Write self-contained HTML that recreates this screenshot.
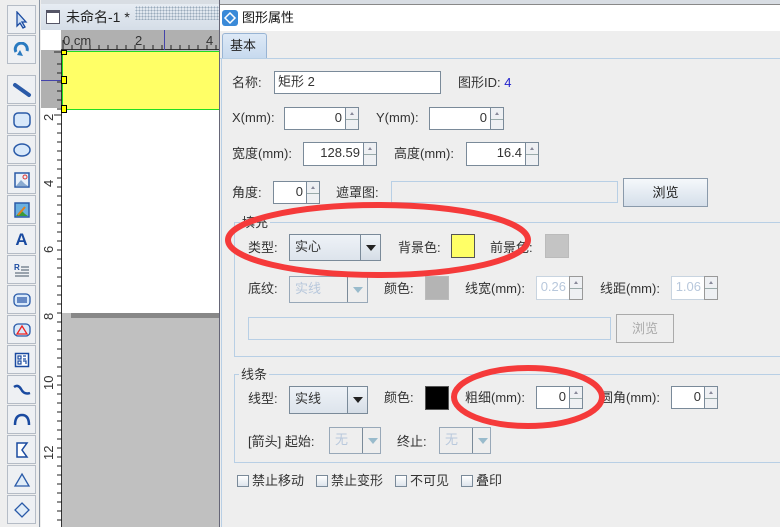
<!DOCTYPE html>
<html><head><meta charset="utf-8"><style>
*{margin:0;padding:0;box-sizing:border-box}
body{width:780px;height:527px;overflow:hidden;background:#eeeeee;font-family:"Liberation Sans","Noto Sans CJK SC",sans-serif;font-size:13px;color:#333;position:relative}
.a{position:absolute}
.tb{position:absolute;left:7px;width:29px;height:29px;border:1px solid #b5bcc6;background:#eef0f3;display:flex;align-items:center;justify-content:center}
.t{position:absolute;white-space:nowrap;line-height:16px}
.in{position:absolute;background:#fff;border:1px solid #7a8a99;text-align:right;padding-right:3px;line-height:20px}
.sp{position:absolute;width:14px;border:1px solid #7a8a99;background:#eef0f3}
.sp:after{content:"";position:absolute;left:0;right:0;top:50%;border-top:1px solid #9aa}
.sp:before{content:"";position:absolute;left:4px;top:4px;border-left:2px solid transparent;border-right:2px solid transparent;border-bottom:3px solid #889}
.cb{position:absolute;border:1px solid #7a8a99;background:linear-gradient(#eef2f7,#dde4ec);line-height:24px;padding-left:5px}
.cb .ar{position:absolute;right:0;top:0;bottom:0;width:20px;border-left:1px solid #7a8a99;background:linear-gradient(#f0f4f8,#d5dde6)}
.cb .ar:after{content:"";position:absolute;left:5px;top:10px;border-left:5px solid transparent;border-right:5px solid transparent;border-top:6px solid #222}
.dis{color:#b8c8dc;border-color:#98a8b8}
.dis .ar:after{border-top-color:#9bc}
.grp{position:absolute;border:1px solid #b8cfe5}
.chk{position:absolute;width:12px;height:12px;border:1px solid #7a8a99;background:linear-gradient(#fff,#dde4ec)}
</style></head><body>
<div class="a" style="left:0;top:0;width:40px;height:527px;background:#eeeeee;border-right:1px solid #8a95a3"></div>
<div class="tb" style="top:5px"><svg width="16" height="18"><path d="M3 1 L3 15 L6 12 L9 17 L11 16 L8 11 L12 11 Z" fill="#cfe0f5" stroke="#1a4aa0" stroke-width="1.3"/></svg></div>
<div class="tb" style="top:35px"><svg width="18" height="16"><path d="M3 10 A6 6 0 1 1 14 9" fill="none" stroke="#2a7ac0" stroke-width="3"/><path d="M7 8 L10 14 L4 13Z" fill="#2a7ac0"/></svg></div>
<div class="tb" style="top:75px"><svg width="20" height="20"><line x1="3" y1="5" x2="17" y2="15" stroke="#2a5aa8" stroke-width="4" stroke-linecap="round"/></svg></div>
<div class="tb" style="top:105px"><svg width="20" height="18"><rect x="2" y="2" width="16" height="14" rx="4" fill="#d8e8fa" stroke="#2a5aa8" stroke-width="1.5"/></svg></div>
<div class="tb" style="top:135px"><svg width="20" height="18"><ellipse cx="10" cy="9" rx="8" ry="6" fill="#d8e8fa" stroke="#2a5aa8" stroke-width="1.5"/></svg></div>
<div class="tb" style="top:165px"><svg width="18" height="18"><rect x="2" y="2" width="14" height="14" fill="#e8f0fa" stroke="#2a5aa8" stroke-width="1.5"/><path d="M3 15 L8 9 L12 13 L15 15Z" fill="#8aaad0"/><circle cx="12" cy="6" r="2" fill="none" stroke="#d33"/></svg></div>
<div class="tb" style="top:195px"><svg width="18" height="18"><rect x="2" y="2" width="14" height="14" fill="#6ab0e0" stroke="#2a5aa8" stroke-width="1.5"/><path d="M3 15 L8 9 L12 13 L15 15Z" fill="#3a9a3a"/><line x1="5" y1="14" x2="12" y2="6" stroke="#e08020" stroke-width="2"/></svg></div>
<div class="tb" style="top:225px;font-weight:bold;font-size:17px;color:#1a4aa0">A</div>
<div class="tb" style="top:255px"><svg width="18" height="16"><text x="1" y="8" font-size="8" font-weight="bold" fill="#1a4aa0" font-family="Liberation Sans">R</text><path d="M8 5h8M8 8h8M2 11h14M2 14h14" stroke="#456" stroke-width="1"/></svg></div>
<div class="tb" style="top:285px"><svg width="20" height="16"><rect x="2" y="2" width="16" height="12" rx="4" fill="#d8e8fa" stroke="#2a5aa8" stroke-width="1.3"/><path d="M6 5v6M8 5v6M10 5v6M12 5v6M14 5v6" stroke="#1a4aa0" stroke-width="1.2"/></svg></div>
<div class="tb" style="top:315px"><svg width="20" height="16"><rect x="2" y="2" width="16" height="12" rx="4" fill="#d8e8fa" stroke="#2a5aa8" stroke-width="1.3"/><path d="M10 4 L15 12 L5 12Z" fill="none" stroke="#e22" stroke-width="1.3"/></svg></div>
<div class="tb" style="top:345px"><svg width="16" height="16"><rect x="1.5" y="1.5" width="13" height="13" fill="#fff" stroke="#1a4aa0" stroke-width="1.5"/><path d="M4 4h3v3H4zM9 4h3M9 7h3M4 9h3v3H4zM9 9h3v3" fill="none" stroke="#1a4aa0" stroke-width="1.2"/></svg></div>
<div class="tb" style="top:375px"><svg width="20" height="16"><path d="M2 5 Q6 2 9 7 Q12 13 18 11" fill="none" stroke="#1a4aa0" stroke-width="2.5"/></svg></div>
<div class="tb" style="top:405px"><svg width="20" height="16"><path d="M3 13 Q3 3 10 3 Q17 3 17 13" fill="none" stroke="#1a4aa0" stroke-width="2.5"/></svg></div>
<div class="tb" style="top:435px"><svg width="16" height="18"><path d="M3 2 L13 2 L8 9 L13 16 L3 16Z" fill="#fff" stroke="#1a4aa0" stroke-width="1.5"/></svg></div>
<div class="tb" style="top:465px"><svg width="18" height="16"><path d="M9 2 L16 14 L2 14Z" fill="#e0ecf8" stroke="#2a5aa8" stroke-width="1.3"/></svg></div>
<div class="tb" style="top:495px"><svg width="18" height="18"><path d="M9 2 L16 9 L9 16 L2 9Z" fill="#e0ecf8" stroke="#2a5aa8" stroke-width="1.3"/></svg></div>
<div class="a" style="left:41px;top:0;width:180px;height:4px;background:#d8dde3"></div>
<div class="a" style="left:41px;top:4px;width:180px;height:26px;background:linear-gradient(#e6ecf3,#d5dde7)"></div>
<div class="a" style="left:135px;top:6px;width:84px;height:14px;background-image:radial-gradient(#9ab 0.8px,transparent 1px);background-size:3px 3px"></div>
<div class="a" style="left:46px;top:10px;width:14px;height:14px;border:1.5px solid #556;background:#fff;border-top-width:3px"></div>
<div class="t" style="left:66px;top:9px;font-size:14px;color:#222">未命名-1 *</div>
<div class="a" style="left:41px;top:30px;width:180px;height:497px;background:#c0c0c0"></div>
<div class="a" style="left:41px;top:30px;width:21px;height:497px;background:#fff;border-right:1px solid #333"></div>
<div class="a" style="left:41px;top:50px;width:20px;height:58px;background:#b0b0b0"></div>
<div class="a" style="left:61px;top:30px;width:160px;height:20px;background:#b0b0b0;border-bottom:1px solid #333"></div>
<div class="t" style="left:63px;top:33px;font-size:13px;color:#333">0 cm</div>
<div class="t" style="left:135px;top:33px;color:#333">2</div>
<div class="t" style="left:206px;top:33px;color:#333">4</div>
<div class="a" style="left:164px;top:30px;width:1px;height:20px;background:#44a"></div>
<div class="a" style="left:41px;top:80px;width:20px;height:1px;background:#44a"></div>
<svg class="a" style="left:41px;top:30px" width="180" height="497">
<g stroke="#222" stroke-width="1">
<path d="M22 10v10M31 15v5M40 15v5M49 15v5M58 15v5M67 15v5M76 15v5M85 15v5M94 15v5M103 15v5M112 15v5M121 15v5M130 15v5M139 15v5M148 15v5M157 15v5M166 15v5M175 15v5"/>
<path d="M13 22h8M16 34h5M16 43h5M16 52h5M16 61h5M16 70h5M16 79h5M13 85h8M16 94h5M16 103h5M16 112h5M16 121h5M16 130h5M16 139h5M16 148h5M16 157h5M16 166h5M16 175h5M16 184h5M16 193h5M16 202h5M16 211h5M16 220h5M16 229h5M16 238h5M16 247h5M16 256h5M16 265h5M16 274h5M16 283h5M16 292h5M16 301h5M16 310h5M16 319h5M16 328h5M16 337h5M16 346h5M16 355h5M16 364h5M16 373h5M16 382h5M16 391h5M16 400h5M16 409h5M16 418h5M16 427h5M16 436h5M16 445h5M16 454h5M16 463h5M16 472h5M16 481h5M16 490h5"/>
</g>
<g font-size="13" fill="#333" font-family="Liberation Sans">
<text transform="translate(12,91) rotate(-90)">2</text>
<text transform="translate(12,157) rotate(-90)">4</text>
<text transform="translate(12,223) rotate(-90)">6</text>
<text transform="translate(12,290) rotate(-90)">8</text>
<text transform="translate(12,360) rotate(-90)">10</text>
<text transform="translate(12,430) rotate(-90)">12</text>
</g></svg>
<div class="a" style="left:62px;top:51px;width:158px;height:262px;background:#fff"></div>
<div class="a" style="left:62px;top:51px;width:158px;height:59px;background:#ffff66;border:1.5px solid #22dd22;border-right:none"></div>
<div class="a" style="left:61px;top:50px;width:6px;height:5px;background:#ff0;border:1px solid #000"></div>
<div class="a" style="left:61px;top:76px;width:6px;height:8px;background:#ff0;border:1px solid #000"></div>
<div class="a" style="left:61px;top:105px;width:6px;height:8px;background:#ff0;border:1px solid #000"></div>
<div class="a" style="left:71px;top:313px;width:149px;height:5px;background:#888"></div>
<div class="a" style="left:219px;top:0;width:561px;height:527px;background:#eeeeee;border-left:1px solid #667"></div>
<div class="a" style="left:220px;top:0;width:560px;height:5px;background:#d8dde3;border-bottom:1px solid #888"></div>
<div class="a" style="left:220px;top:5px;width:560px;height:26px;background:#fff"></div>
<svg class="a" style="left:222px;top:10px" width="16" height="16"><rect width="16" height="16" rx="3" fill="#3a8ad8"/><path d="M8 3 L13 8 L8 13 L3 8Z" fill="none" stroke="#fff" stroke-width="1.5"/></svg>
<div class="t" style="left:242px;top:10px;color:#111">图形属性</div>
<div class="a" style="left:222px;top:33px;width:45px;height:26px;background:linear-gradient(#dde9f6,#c6d9ee);border:1px solid #98b4d4;border-bottom:none;border-radius:3px 3px 0 0"></div>
<div class="t" style="left:230px;top:38px;color:#222">基本</div>
<div class="a" style="left:220px;top:58px;width:560px;height:1px;background:#b8cfe5"></div>
<div class="a" style="left:221px;top:58px;width:1px;height:469px;background:#b8cfe5"></div>
<div class="t" style="left:232px;top:75px">名称:</div>
<div class="in" style="left:274px;top:71px;width:167px;height:23px;text-align:left;padding-left:3px">矩形 2</div>
<div class="t" style="left:458px;top:75px">图形ID: <span style="color:#22c">4</span></div>
<div class="t" style="left:232px;top:110px">X(mm):</div>
<div class="in" style="left:284px;top:107px;width:62px;height:23px">0</div><div class="sp" style="left:345px;top:107px;height:23px"></div>
<div class="t" style="left:376px;top:110px">Y(mm):</div>
<div class="in" style="left:429px;top:107px;width:62px;height:23px">0</div><div class="sp" style="left:490px;top:107px;height:23px"></div>
<div class="t" style="left:232px;top:146px">宽度(mm):</div>
<div class="in" style="left:303px;top:142px;width:61px;height:24px">128.59</div><div class="sp" style="left:363px;top:142px;height:24px"></div>
<div class="t" style="left:394px;top:146px">高度(mm):</div>
<div class="in" style="left:466px;top:142px;width:60px;height:24px">16.4</div><div class="sp" style="left:525px;top:142px;height:24px"></div>
<div class="t" style="left:232px;top:185px">角度:</div>
<div class="in" style="left:273px;top:181px;width:34px;height:23px">0</div><div class="sp" style="left:306px;top:181px;height:23px"></div>
<div class="t" style="left:336px;top:185px">遮罩图:</div>
<div class="a" style="left:391px;top:181px;width:227px;height:22px;border:1px solid #b8cfe5;background:#eee"></div>
<div class="a" style="left:623px;top:178px;width:85px;height:29px;border:1px solid #8a9aab;background:linear-gradient(#f5f8fb,#d5dfea);text-align:center;line-height:27px;color:#222">浏览</div>
<div class="grp" style="left:234px;top:222px;width:560px;height:135px"></div>
<div class="t" style="left:240px;top:215px;background:#eee;padding:0 2px">填充</div>
<div class="t" style="left:248px;top:240px">类型:</div>
<div class="cb" style="left:289px;top:234px;width:92px;height:27px">实心<div class="ar"></div></div>
<div class="t" style="left:398px;top:240px">背景色:</div>
<div class="a" style="left:451px;top:234px;width:24px;height:24px;background:#ffff66;border:1px solid #555"></div>
<div class="t" style="left:490px;top:240px">前景色:</div>
<div class="a" style="left:545px;top:234px;width:24px;height:24px;background:#c4c4c4;border:1px solid #bbb"></div>
<div class="t" style="left:248px;top:281px">底纹:</div>
<div class="cb dis" style="left:289px;top:276px;width:79px;height:27px;background:#eee">实线<div class="ar" style="background:#eee"></div></div>
<div class="t" style="left:384px;top:281px">颜色:</div>
<div class="a" style="left:425px;top:276px;width:24px;height:24px;background:#b4b4b4;border:1px solid #bbb"></div>
<div class="t" style="left:465px;top:281px">线宽(mm):</div>
<div class="in" style="left:536px;top:276px;width:34px;height:24px;color:#b8c8dc;border-color:#c8d4e0">0.26</div><div class="sp" style="left:569px;top:276px;height:24px;border-color:#999"></div>
<div class="t" style="left:600px;top:281px">线距(mm):</div>
<div class="in" style="left:671px;top:276px;width:34px;height:24px;color:#b8c8dc;border-color:#c8d4e0">1.06</div><div class="sp" style="left:704px;top:276px;height:24px;border-color:#999"></div>
<div class="a" style="left:248px;top:317px;width:363px;height:23px;border:1px solid #b8cfe5"></div>
<div class="a" style="left:616px;top:314px;width:58px;height:29px;border:1px solid #aaa;text-align:center;line-height:27px;color:#aaa">浏览</div>
<div class="grp" style="left:234px;top:374px;width:560px;height:89px"></div>
<div class="t" style="left:239px;top:367px;background:#eee;padding:0 2px">线条</div>
<div class="t" style="left:248px;top:391px">线型:</div>
<div class="cb" style="left:289px;top:386px;width:79px;height:28px">实线<div class="ar"></div></div>
<div class="t" style="left:384px;top:390px">颜色:</div>
<div class="a" style="left:425px;top:386px;width:24px;height:24px;background:#000;border:1px solid #555"></div>
<div class="t" style="left:465px;top:390px">粗细(mm):</div>
<div class="in" style="left:536px;top:386px;width:34px;height:23px">0</div><div class="sp" style="left:569px;top:386px;height:23px"></div>
<div class="t" style="left:600px;top:390px">圆角(mm):</div>
<div class="in" style="left:671px;top:386px;width:34px;height:23px">0</div><div class="sp" style="left:704px;top:386px;height:23px"></div>
<div class="t" style="left:248px;top:434px">[箭头] 起始:</div>
<div class="cb dis" style="left:329px;top:427px;width:52px;height:27px;background:#eee">无<div class="ar" style="background:#eee;width:18px"></div></div>
<div class="t" style="left:397px;top:434px">终止:</div>
<div class="cb dis" style="left:439px;top:427px;width:52px;height:27px;background:#eee">无<div class="ar" style="background:#eee;width:18px"></div></div>
<div class="chk" style="left:237px;top:475px"></div><div class="t" style="left:252px;top:473px">禁止移动</div>
<div class="chk" style="left:316px;top:475px"></div><div class="t" style="left:331px;top:473px">禁止变形</div>
<div class="chk" style="left:395px;top:475px"></div><div class="t" style="left:410px;top:473px">不可见</div>
<div class="chk" style="left:461px;top:475px"></div><div class="t" style="left:476px;top:473px">叠印</div>
<svg class="a" style="left:0;top:0" width="780" height="527">
<ellipse cx="378" cy="240" rx="150" ry="35" fill="none" stroke="#f53a3a" stroke-width="6"/>
<ellipse cx="528" cy="397" rx="74" ry="29" fill="none" stroke="#f53a3a" stroke-width="6"/>
</svg>
</body></html>
